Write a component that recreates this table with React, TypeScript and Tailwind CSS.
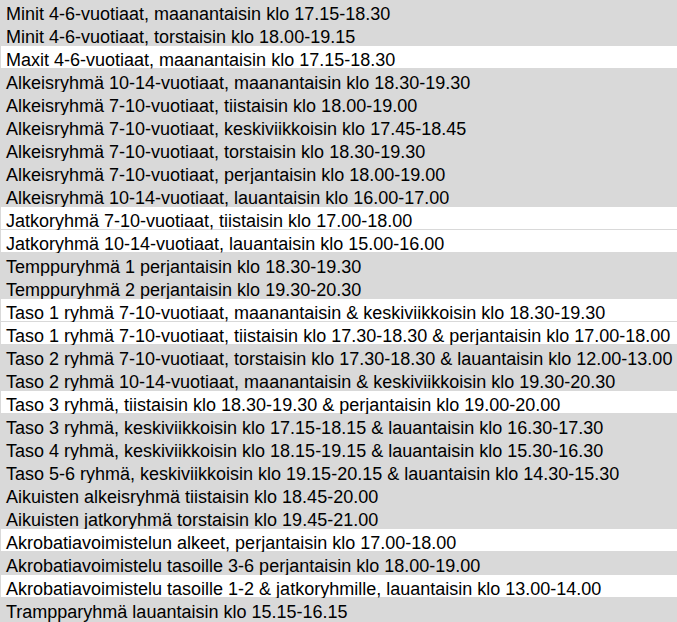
const rows: [string, boolean][] = [
  ['Minit 4-6-vuotiaat, maanantaisin klo 17.15-18.30', true],
  ['Minit 4-6-vuotiaat, torstaisin klo 18.00-19.15', true],
  ['Maxit 4-6-vuotiaat, maanantaisin klo 17.15-18.30', false],
  ['Alkeisryhmä 10-14-vuotiaat, maanantaisin klo 18.30-19.30', true],
  ['Alkeisryhmä 7-10-vuotiaat, tiistaisin klo 18.00-19.00', true],
  ['Alkeisryhmä 7-10-vuotiaat, keskiviikkoisin klo 17.45-18.45', true],
  ['Alkeisryhmä 7-10-vuotiaat, torstaisin klo 18.30-19.30', true],
  ['Alkeisryhmä 7-10-vuotiaat, perjantaisin klo 18.00-19.00', true],
  ['Alkeisryhmä 10-14-vuotiaat, lauantaisin klo 16.00-17.00', true],
  ['Jatkoryhmä 7-10-vuotiaat, tiistaisin klo 17.00-18.00', false],
  ['Jatkoryhmä 10-14-vuotiaat, lauantaisin klo 15.00-16.00', false],
  ['Temppuryhmä 1 perjantaisin klo 18.30-19.30', true],
  ['Temppuryhmä 2 perjantaisin klo 19.30-20.30', true],
  ['Taso 1 ryhmä 7-10-vuotiaat, maanantaisin & keskiviikkoisin klo 18.30-19.30', false],
  ['Taso 1 ryhmä 7-10-vuotiaat, tiistaisin klo 17.30-18.30 & perjantaisin klo 17.00-18.00', false],
  ['Taso 2 ryhmä 7-10-vuotiaat, torstaisin klo 17.30-18.30 & lauantaisin klo 12.00-13.00', true],
  ['Taso 2 ryhmä 10-14-vuotiaat, maanantaisin & keskiviikkoisin klo 19.30-20.30', true],
  ['Taso 3 ryhmä, tiistaisin klo 18.30-19.30 & perjantaisin klo 19.00-20.00', false],
  ['Taso 3 ryhmä, keskiviikkoisin klo 17.15-18.15 & lauantaisin klo 16.30-17.30', true],
  ['Taso 4 ryhmä, keskiviikkoisin klo 18.15-19.15 & lauantaisin klo 15.30-16.30', true],
  ['Taso 5-6 ryhmä, keskiviikkoisin klo 19.15-20.15 & lauantaisin klo 14.30-15.30', true],
  ['Aikuisten alkeisryhmä tiistaisin klo 18.45-20.00', true],
  ['Aikuisten jatkoryhmä torstaisin klo 19.45-21.00', true],
  ['Akrobatiavoimistelun alkeet, perjantaisin klo 17.00-18.00', false],
  ['Akrobatiavoimistelu tasoille 3-6 perjantaisin klo 18.00-19.00', true],
  ['Akrobatiavoimistelu tasoille 1-2 & jatkoryhmille, lauantaisin klo 13.00-14.00', false],
  ['Trampparyhmä lauantaisin klo 15.15-16.15', true],
]

export default function App() {
  return (
    <div className="w-[677px] h-[622px] bg-[#d9d9d9] flex flex-col gap-px overflow-hidden font-['Liberation_Sans',Arial,sans-serif] text-[18px] text-black">
      {rows.map(([text, gray]) => (
        <div
          key={text}
          className={
            gray
              ? 'h-[22px] shrink-0 bg-[#d9d9d9] pl-[6px] pt-[4px] leading-[20px] whitespace-nowrap'
              : 'h-[22px] shrink-0 bg-white border-l border-[#d9d9d9] pl-[5px] pt-[4px] leading-[20px] whitespace-nowrap'
          }
        >
          {text}
        </div>
      ))}
    </div>
  )
}
